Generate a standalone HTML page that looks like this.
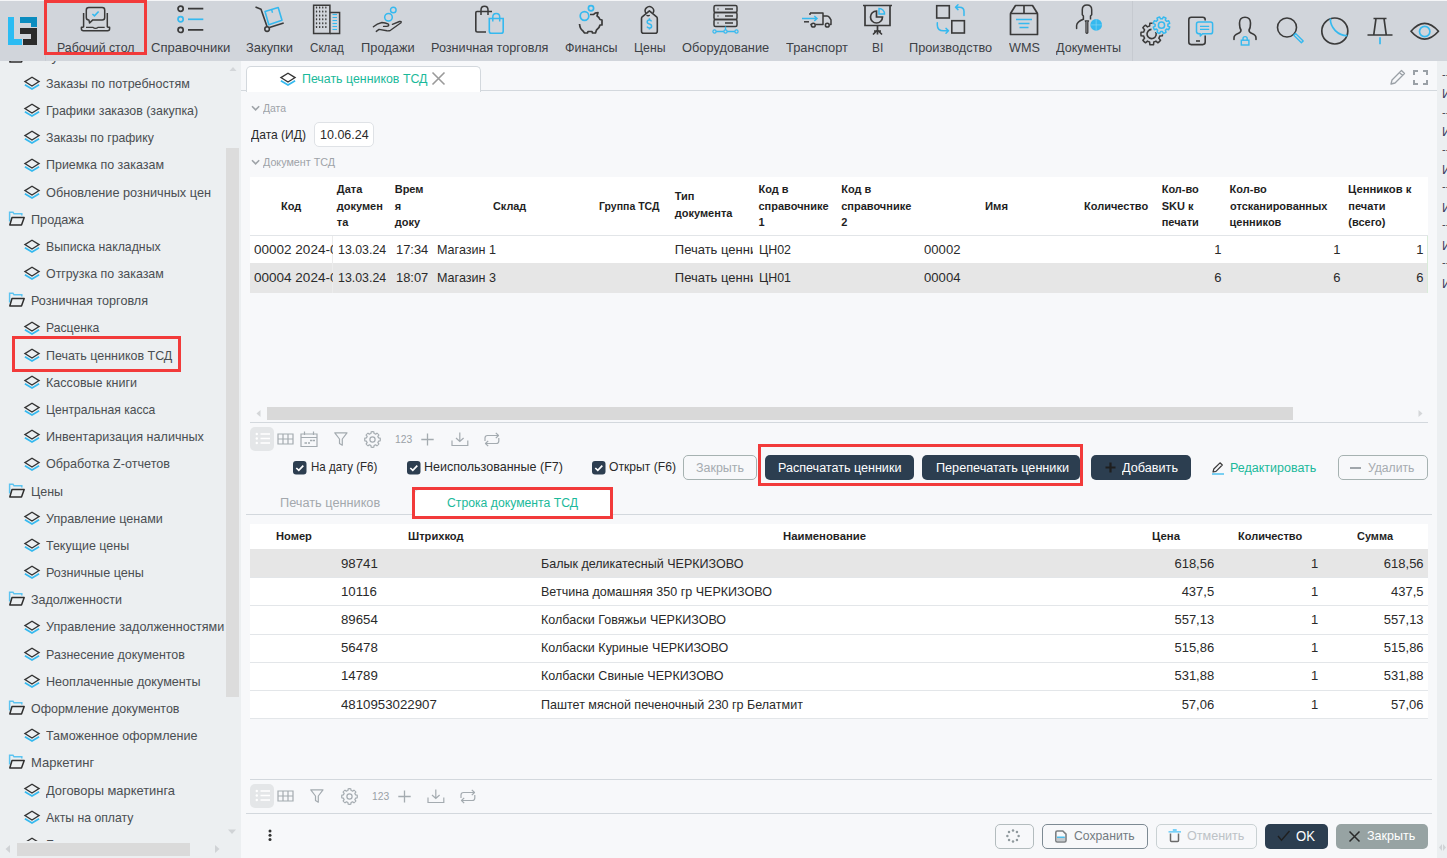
<!DOCTYPE html><html><head><meta charset="utf-8"><style>
html,body{margin:0;padding:0;}
body{width:1447px;height:858px;overflow:hidden;position:relative;background:#f7f8fa;font-family:"Liberation Sans",sans-serif;}
.t{position:absolute;white-space:nowrap;line-height:1;}
svg{overflow:visible}
</style></head><body>
<div style="position:absolute;left:0px;top:0px;width:1447px;height:1px;background:#f4f5f7"></div>
<div style="position:absolute;left:0px;top:1px;width:1447px;height:60px;background:#d1d5db"></div>
<div style="position:absolute;left:1132px;top:1px;width:1px;height:60px;background:#c6cad0"></div>
<div style="position:absolute;left:45px;top:1px;width:1px;height:60px;background:#c8ccd2"></div>
<div style="position:absolute;left:0px;top:61px;width:241px;height:797px;background:#eceff1"></div>
<div style="position:absolute;left:241px;top:61px;width:1196px;height:797px;background:#f7f8fa"></div>
<div style="position:absolute;left:1437px;top:61px;width:10px;height:797px;background:#eceff1"></div>
<div style="position:absolute;left:8px;top:17px;width:6px;height:28px;background:#2bbcf3"></div>
<div style="position:absolute;left:8px;top:39px;width:14px;height:6px;background:#2bbcf3"></div>
<div style="position:absolute;left:20px;top:17px;width:17px;height:6px;background:#0b8cbf"></div>
<div style="position:absolute;left:31px;top:17px;width:6px;height:10px;background:#0b8cbf"></div>
<div style="position:absolute;left:20px;top:28px;width:17px;height:6px;background:#2b2b2b"></div>
<div style="position:absolute;left:31px;top:28px;width:6px;height:17px;background:#2b2b2b"></div>
<div style="position:absolute;left:23px;top:39px;width:14px;height:6px;background:#2b2b2b"></div>
<svg style="position:absolute;left:80px;top:7px" width="32" height="26" viewBox="0 0 32 26" fill="none"><path d="M3.6 6 V20.3 M27.3 6 V20.3" stroke="#3a3a3a" stroke-width="1.5"/>
<path d="M3.6 20.3 H1.4 V21.7 Q1.4 23.7 3.4 23.7 H27.6 Q29.6 23.7 29.6 21.7 V20.3 H27.3" stroke="#3a3a3a" stroke-width="1.5" stroke-linejoin="round"/>
<path d="M6 20.4 H13 Q14 21.4 15.5 21.4 Q17 21.4 18 20.4 H24.7" stroke="#3a3a3a" stroke-width="1.3"/>
<path d="M8.8 0.5 H22.2 Q24.7 0.5 24.7 3 V10.4 Q24.7 12.9 22.2 12.9 H12.8 L9.6 16 L8.9 12.9 Q6.3 12.9 6.3 10.4 V3 Q6.3 0.5 8.8 0.5 Z" stroke="#3a3a3a" stroke-width="1.5" stroke-linejoin="round"/>
<path d="M12.4 7 L14.5 8.9 L18.6 4.5" stroke="#35b9ef" stroke-width="1.6"/></svg>
<svg style="position:absolute;left:176px;top:5px" width="30" height="28" viewBox="0 0 30 28" fill="none"><circle cx="4.6" cy="3.7" r="2.6" stroke="#3a3a3a" stroke-width="1.7"/>
<circle cx="4.6" cy="14.3" r="2.6" stroke="#35b9ef" stroke-width="1.7"/>
<circle cx="4.6" cy="24.9" r="2.6" stroke="#3a3a3a" stroke-width="1.7"/>
<path d="M12 3.7 H27.3 M12 24.9 H27.3" stroke="#3a3a3a" stroke-width="1.7"/>
<path d="M12 14.3 H27.3" stroke="#35b9ef" stroke-width="1.7"/></svg>
<svg style="position:absolute;left:254px;top:6px" width="32" height="27" viewBox="0 0 32 27" fill="none"><path d="M1.5 1 L7 3.2 L13.1 20.8" stroke="#3a3a3a" stroke-width="1.6" stroke-linejoin="round"/>
<circle cx="13.1" cy="23.1" r="2.3" stroke="#3a3a3a" stroke-width="1.6"/>
<path d="M15.4 21.4 L29.7 17" stroke="#3a3a3a" stroke-width="1.6"/>
<path d="M11 5.4 L24.2 1.5 L28 14.3 L14.8 18.7 Z" stroke="#35b9ef" stroke-width="1.6" stroke-linejoin="round"/>
<path d="M17.6 3.5 L18.5 6.8" stroke="#35b9ef" stroke-width="1.4"/></svg>
<svg style="position:absolute;left:312px;top:4px" width="30" height="32" viewBox="0 0 30 32" fill="none"><path d="M1.6 29.5 V1.3 H17.9 V29.5 Z" stroke="#3a3a3a" stroke-width="1.5"/>
<path d="M17.9 8.5 H27.6 V29.5 H17.9" stroke="#3a3a3a" stroke-width="1.5"/><rect x="3.9" y="2.6" width="1.3" height="2" rx="0.5" fill="#3a3a3a"/><rect x="3.9" y="6.5" width="1.3" height="2" rx="0.5" fill="#3a3a3a"/><rect x="3.9" y="10.4" width="1.3" height="2" rx="0.5" fill="#3a3a3a"/><rect x="3.9" y="14.3" width="1.3" height="2" rx="0.5" fill="#3a3a3a"/><rect x="3.9" y="18.2" width="1.3" height="2" rx="0.5" fill="#3a3a3a"/><rect x="3.9" y="22.1" width="1.3" height="2" rx="0.5" fill="#3a3a3a"/><rect x="7.0" y="2.6" width="1.3" height="2" rx="0.5" fill="#3a3a3a"/><rect x="7.0" y="6.5" width="1.3" height="2" rx="0.5" fill="#3a3a3a"/><rect x="7.0" y="10.4" width="1.3" height="2" rx="0.5" fill="#3a3a3a"/><rect x="7.0" y="14.3" width="1.3" height="2" rx="0.5" fill="#3a3a3a"/><rect x="7.0" y="18.2" width="1.3" height="2" rx="0.5" fill="#3a3a3a"/><rect x="7.0" y="22.1" width="1.3" height="2" rx="0.5" fill="#3a3a3a"/><rect x="10.1" y="2.6" width="1.3" height="2" rx="0.5" fill="#3a3a3a"/><rect x="10.1" y="6.5" width="1.3" height="2" rx="0.5" fill="#3a3a3a"/><rect x="10.1" y="10.4" width="1.3" height="2" rx="0.5" fill="#3a3a3a"/><rect x="10.1" y="14.3" width="1.3" height="2" rx="0.5" fill="#3a3a3a"/><rect x="10.1" y="18.2" width="1.3" height="2" rx="0.5" fill="#3a3a3a"/><rect x="10.1" y="22.1" width="1.3" height="2" rx="0.5" fill="#3a3a3a"/><rect x="13.2" y="2.6" width="1.3" height="2" rx="0.5" fill="#3a3a3a"/><rect x="13.2" y="6.5" width="1.3" height="2" rx="0.5" fill="#3a3a3a"/><rect x="13.2" y="10.4" width="1.3" height="2" rx="0.5" fill="#3a3a3a"/><rect x="13.2" y="14.3" width="1.3" height="2" rx="0.5" fill="#3a3a3a"/><rect x="13.2" y="18.2" width="1.3" height="2" rx="0.5" fill="#3a3a3a"/><rect x="13.2" y="22.1" width="1.3" height="2" rx="0.5" fill="#3a3a3a"/><path d="M20.5 10.5 H25" stroke="#35b9ef" stroke-width="1.1"/><path d="M20.5 13.5 H25" stroke="#35b9ef" stroke-width="1.1"/><path d="M20.5 16.5 H25" stroke="#35b9ef" stroke-width="1.1"/><path d="M20.5 19.5 H25" stroke="#35b9ef" stroke-width="1.1"/><path d="M20.5 22.5 H25" stroke="#35b9ef" stroke-width="1.1"/><path d="M20.5 25.5 H25" stroke="#35b9ef" stroke-width="1.1"/></svg>
<svg style="position:absolute;left:372px;top:6px" width="32" height="28" viewBox="0 0 32 28" fill="none"><circle cx="21.3" cy="4" r="2.8" stroke="#35b9ef" stroke-width="1.4"/>
<circle cx="16.5" cy="11.2" r="3.8" stroke="#35b9ef" stroke-width="1.5"/>
<path d="M1.4 20.8 Q5 17.5 9.9 16.5 Q13.5 16.7 15.9 17.8 Q17.8 19.5 15.4 20.2 L11.6 20.4" stroke="#3a3a3a" stroke-width="1.4" stroke-linecap="round" stroke-linejoin="round"/>
<path d="M20.4 18.3 L27.5 15.5 Q29.8 15 29 16.8 L18.5 24.3 Q17 25 15 24.8 L7 23.4 L4.3 25.4" stroke="#3a3a3a" stroke-width="1.4" stroke-linecap="round" stroke-linejoin="round"/></svg>
<svg style="position:absolute;left:474px;top:5px" width="32" height="30" viewBox="0 0 32 30" fill="none"><path d="M18 6.5 H3 Q1.8 6.5 1.8 7.8 V25.3 Q1.8 27 3.5 27 H12" stroke="#3a3a3a" stroke-width="1.6"/>
<path d="M7 10 V5 Q7 1.3 10.5 1.3 Q14 1.3 14 5 V10" stroke="#3a3a3a" stroke-width="1.5"/>
<path d="M15.3 13.5 H29.2 V26.2 Q29.2 28.3 27 28.3 H17.5 Q15.3 28.3 15.3 26.2 Z" stroke="#35b9ef" stroke-width="1.6"/>
<path d="M18.8 16.5 V12 Q18.8 8.5 22.2 8.5 Q25.7 8.5 25.7 12 V16.5" stroke="#35b9ef" stroke-width="1.5"/></svg>
<svg style="position:absolute;left:577px;top:4px" width="28" height="31" viewBox="0 0 28 31" fill="none"><circle cx="14" cy="4.3" r="2.6" stroke="#35b9ef" stroke-width="1.7"/>
<circle cx="7.5" cy="12" r="4.3" stroke="#35b9ef" stroke-width="1.7"/>
<path d="M2.5 20 Q3 25 6 27 L7.5 29 H10.5 L11 27.5 H15 L15.5 29 H18.5 L19.5 26 Q22.5 24 23 21 H25 V16 L23 15.5 Q22 13 20 12 L21 8.5 Q18 8.5 16.5 10.5 L13 10.5" stroke="#3a3a3a" stroke-width="1.7" stroke-linejoin="round"/></svg>
<svg style="position:absolute;left:639px;top:4px" width="21" height="31" viewBox="0 0 21 31" fill="none"><path d="M7.2 9.5 A4.2 4.2 0 1 1 14 9" stroke="#3a3a3a" stroke-width="1.5"/>
<path d="M10.4 6.8 L3.2 12.8 Q2.5 13.5 2.5 14.7 V27.2 Q2.5 29.2 4.5 29.2 H16.3 Q18.3 29.2 18.3 27.2 V14.7 Q18.3 13.5 17.6 12.8 Z" stroke="#3a3a3a" stroke-width="1.6" stroke-linejoin="round"/>
<path d="M7.5 11.2 Q9 12.3 10.8 11.2" stroke="#3a3a3a" stroke-width="1.3"/>
<path d="M12.6 17.3 Q11.8 16 10.4 16 Q8.2 16 8.2 18 Q8.2 19.6 10.4 19.9 Q12.6 20.3 12.6 22.2 Q12.6 24.1 10.4 24.1 Q8.7 24.1 8 22.7 M10.4 14.3 V16 M10.4 24.1 V25.6" stroke="#35b9ef" stroke-width="1.5"/></svg>
<svg style="position:absolute;left:712px;top:4px" width="28" height="32" viewBox="0 0 28 32" fill="none"><rect x="2" y="1.5" width="23" height="7" rx="1.5" stroke="#3a3a3a" stroke-width="1.5"/>
<rect x="2" y="8.5" width="23" height="7" rx="1.5" stroke="#3a3a3a" stroke-width="1.5"/>
<rect x="2" y="15.5" width="23" height="7" rx="1.5" stroke="#3a3a3a" stroke-width="1.5"/>
<path d="M5.5 5 H6.5 M5.5 12 H6.5 M5.5 19 H6.5" stroke="#3a3a3a" stroke-width="1.3"/>
<path d="M13 5 H21 M13 12 H21 M13 19 H21" stroke="#3a3a3a" stroke-width="1.4"/>
<path d="M3.5 27.5 H23.5 M13.5 22.5 V26" stroke="#35b9ef" stroke-width="1.3"/>
<circle cx="2.5" cy="27.5" r="1.6" stroke="#35b9ef" stroke-width="1.2" fill="#d1d5db"/><circle cx="13.5" cy="27.5" r="1.6" stroke="#35b9ef" stroke-width="1.2" fill="#d1d5db"/><circle cx="24.5" cy="27.5" r="1.6" stroke="#35b9ef" stroke-width="1.2" fill="#d1d5db"/></svg>
<svg style="position:absolute;left:801px;top:11px" width="32" height="18" viewBox="0 0 32 18" fill="none"><path d="M9 2 H22 V13.5 H14.5 M22 5 H26 Q27.5 5 28.5 6.5 L30 8.8 V13.5 H28.8 M9 2 V4" stroke="#3a3a3a" stroke-width="1.5" stroke-linejoin="round"/>
<circle cx="12.3" cy="14.2" r="1.9" stroke="#3a3a3a" stroke-width="1.5"/><circle cx="26.3" cy="14.2" r="1.9" stroke="#3a3a3a" stroke-width="1.5"/>
<path d="M9.3 13.5 H10" stroke="#3a3a3a" stroke-width="1.5"/>
<path d="M1 7.5 H16 M13.3 5 L16 7.5 L13.3 10" stroke="#35b9ef" stroke-width="1.5"/>
<path d="M3 10.8 H8" stroke="#3a3a3a" stroke-width="1.5"/></svg>
<svg style="position:absolute;left:862px;top:4px" width="31" height="32" viewBox="0 0 31 32" fill="none"><path d="M1 1.5 H30 M3 1.5 V21.5 H28 V1.5" stroke="#3a3a3a" stroke-width="1.7"/>
<path d="M15.5 21.5 V26 M11 30.5 L15.5 26 L20 30.5 M15.5 26 V30.5 M12 27 H19" stroke="#3a3a3a" stroke-width="1.7"/>
<path d="M14.5 7 A6 6 0 1 0 20.5 13 H14.5 Z" stroke="#3a3a3a" stroke-width="1.7"/>
<path d="M17 4.5 A5.5 5.5 0 0 1 22.5 10 H17 Z" stroke="#35b9ef" stroke-width="1.4"/></svg>
<svg style="position:absolute;left:935px;top:4px" width="31" height="31" viewBox="0 0 31 31" fill="none"><rect x="1.7" y="1.7" width="12.6" height="12.3" stroke="#3a3a3a" stroke-width="1.6"/>
<rect x="16.8" y="16.7" width="12.6" height="12.3" stroke="#3a3a3a" stroke-width="1.6"/>
<path d="M20.5 3.2 H24.5 Q29 3.2 29 7.5 V11.5 M20.5 3.2 L23 0.8 M20.5 3.2 L23 5.6" stroke="#35b9ef" stroke-width="1.5" stroke-linecap="round"/>
<path d="M13.5 26.8 H8.5 Q2.3 26.8 2.3 21 V18.8 M13.5 26.8 L11 24.4 M13.5 26.8 L11 29.2" stroke="#35b9ef" stroke-width="1.5" stroke-linecap="round"/></svg>
<svg style="position:absolute;left:1009px;top:4px" width="30" height="32" viewBox="0 0 30 32" fill="none"><path d="M1.5 9.5 H28.5 V30.5 H1.5 Z M1.5 9.5 L6.5 1.5 H23.5 L28.5 9.5 M15 1.5 V9.5" stroke="#3a3a3a" stroke-width="1.7" stroke-linejoin="round"/>
<path d="M7 15.5 H23 M9.5 19.5 H20.5 M10.5 23.5 H19.5" stroke="#35b9ef" stroke-width="1.5"/></svg>
<svg style="position:absolute;left:1074px;top:4px" width="30" height="32" viewBox="0 0 30 32" fill="none"><path d="M9.4 15.5 V12 L8.3 10.8 V5.8 Q8.3 1 13 1 Q17.7 1 17.7 5.8 V10.8 L16.5 12 V15.6" stroke="#3a3a3a" stroke-width="1.5" stroke-linejoin="round"/>
<path d="M9.4 15.2 Q3 17.5 2.6 21.5 V24.5" stroke="#3a3a3a" stroke-width="1.5" stroke-linecap="round"/>
<path d="M11.2 16.8 H14.6 L13.8 18.3 V28.6 Q12.9 30.2 12 28.6 V18.3 Z" stroke="#3a3a3a" stroke-width="1.3" stroke-linejoin="round"/>
<circle cx="22.2" cy="20.9" r="5.9" fill="#35b9ef"/>
<path d="M16.5 20.9 H28 M22.2 15 V26.8" stroke="#8fd6f5" stroke-width="0.6"/></svg>
<svg style="position:absolute;left:1135px;top:12px" width="40" height="38" viewBox="0 0 40 38" fill="none"><path d="M24.74 19.94 L27.34 20.14 A10.8 10.8 0 0 1 27.34 23.86 L24.74 24.06 A8.3 8.3 0 0 1 23.84 26.23 L25.54 28.21 A10.8 10.8 0 0 1 22.91 30.84 L20.93 29.14 A8.3 8.3 0 0 1 18.76 30.04 L18.56 32.64 A10.8 10.8 0 0 1 14.84 32.64 L14.64 30.04 A8.3 8.3 0 0 1 12.47 29.14 L10.49 30.84 A10.8 10.8 0 0 1 7.86 28.21 L9.56 26.23 A8.3 8.3 0 0 1 8.66 24.06 L6.06 23.86 A10.8 10.8 0 0 1 6.06 20.14 L8.66 19.94 A8.3 8.3 0 0 1 9.56 17.77 L7.86 15.79 A10.8 10.8 0 0 1 10.49 13.16 L12.47 14.86 A8.3 8.3 0 0 1 14.64 13.96 L14.84 11.36 A10.8 10.8 0 0 1 18.56 11.36 L18.76 13.96 A8.3 8.3 0 0 1 20.93 14.86 L22.91 13.16 A10.8 10.8 0 0 1 25.54 15.79 L23.84 17.77 A8.3 8.3 0 0 1 24.74 19.94 Z" stroke="#3a3a3a" stroke-width="1.5" stroke-linejoin="round"/>
<path d="M20.5 19.5 A4.6 4.6 0 1 1 16.5 17.4" stroke="#3a3a3a" stroke-width="1.6"/>
<circle cx="26.5" cy="13.2" r="9.2" fill="#d1d5db"/>
<path d="M32.84 14.08 L34.70 15.01 A8.4 8.4 0 0 1 33.60 17.68 L31.63 17.03 A6.4 6.4 0 0 1 30.36 18.31 L31.02 20.28 A8.4 8.4 0 0 1 28.35 21.39 L27.42 19.53 A6.4 6.4 0 0 1 25.62 19.54 L24.69 21.40 A8.4 8.4 0 0 1 22.02 20.30 L22.67 18.33 A6.4 6.4 0 0 1 21.39 17.06 L19.42 17.72 A8.4 8.4 0 0 1 18.31 15.05 L20.17 14.12 A6.4 6.4 0 0 1 20.16 12.32 L18.30 11.39 A8.4 8.4 0 0 1 19.40 8.72 L21.37 9.37 A6.4 6.4 0 0 1 22.64 8.09 L21.98 6.12 A8.4 8.4 0 0 1 24.65 5.01 L25.58 6.87 A6.4 6.4 0 0 1 27.38 6.86 L28.31 5.00 A8.4 8.4 0 0 1 30.98 6.10 L30.33 8.07 A6.4 6.4 0 0 1 31.61 9.34 L33.58 8.68 A8.4 8.4 0 0 1 34.69 11.35 L32.83 12.28 A6.4 6.4 0 0 1 32.84 14.08 Z" stroke="#35b9ef" stroke-width="1.5" stroke-linejoin="round"/>
<circle cx="26.5" cy="13.2" r="3.1" stroke="#35b9ef" stroke-width="1.5"/></svg>
<svg style="position:absolute;left:1187px;top:16px" width="28" height="30" viewBox="0 0 28 30" fill="none"><path d="M18.2 4.5 V3.8 Q18.2 1.3 15.7 1.3 H4.3 Q1.8 1.3 1.8 3.8 V26.1 Q1.8 28.6 4.3 28.6 H15.7 Q18.2 28.6 18.2 26.1 V19.5" stroke="#3a3a3a" stroke-width="1.6"/>
<path d="M9 25 H13" stroke="#3a3a3a" stroke-width="1.6"/>
<path d="M11.7 6 H23.5 Q25.6 6 25.6 8 V15.7 Q25.6 17.8 23.5 17.8 H15.5 L13.3 20 V17.8 Q9.5 17.8 9.5 15.7 V8 Q9.5 6 11.7 6 Z" stroke="#35b9ef" stroke-width="1.5" stroke-linejoin="round"/>
<path d="M13 10.4 H22.2 M13 13.4 H22.2" stroke="#35b9ef" stroke-width="1.3"/></svg>
<svg style="position:absolute;left:1232px;top:16px" width="27" height="30" viewBox="0 0 27 30" fill="none"><path d="M2 23.5 V22 Q2 19 6 17.5 Q9 16.5 9 14 Q7.5 12 7.5 7 Q7.5 1.3 13 1.3 Q18.5 1.3 18.5 7 Q18.5 12 17 14 Q17 16.5 20 17.5 Q24 19 24 22 V23.5" stroke="#3a3a3a" stroke-width="1.6" stroke-linecap="round"/>
<rect x="9.3" y="24.2" width="7.6" height="4.8" stroke="#35b9ef" stroke-width="1.4"/>
<path d="M11 24.2 V22.6 Q11 20.6 13.1 20.6 Q15.2 20.6 15.2 22.6 V24.2" stroke="#35b9ef" stroke-width="1.4"/></svg>
<svg style="position:absolute;left:1276px;top:17px" width="30" height="29" viewBox="0 0 30 29" fill="none"><circle cx="11" cy="10.5" r="9.5" stroke="#3a3a3a" stroke-width="1.6"/>
<path d="M17.8 18.2 L19.6 16.4 L27.2 24 L25.4 25.8 Z" stroke="#35b9ef" stroke-width="1.4" stroke-linejoin="round"/></svg>
<svg style="position:absolute;left:1320px;top:16px" width="30" height="30" viewBox="0 0 30 30" fill="none"><circle cx="14.8" cy="15" r="13" stroke="#3a3a3a" stroke-width="1.7"/>
<path d="M10.3 2.6 A17 17 0 0 0 27.3 19.6" stroke="#35b9ef" stroke-width="1.7"/></svg>
<svg style="position:absolute;left:1367px;top:17px" width="27" height="29" viewBox="0 0 27 29" fill="none"><path d="M6.5 1.5 H19.5 M9 1.5 L6.8 17.5 M17 1.5 L19.2 17.5 M0.5 18 H25.5" stroke="#3a3a3a" stroke-width="1.7"/>
<path d="M13 20.3 V27.2" stroke="#35b9ef" stroke-width="1.7"/></svg>
<svg style="position:absolute;left:1409px;top:21px" width="32" height="21" viewBox="0 0 32 21" fill="none"><path d="M2 10.3 Q15.5 -5.5 29.5 10.3 Q15.5 26 2 10.3 Z" stroke="#3a3a3a" stroke-width="1.7" stroke-linejoin="round"/>
<circle cx="15.7" cy="10.5" r="5.2" stroke="#35b9ef" stroke-width="1.7"/></svg>
<div style="position:absolute;left:44px;top:0px;width:103px;height:55px;box-sizing:border-box;border:3px solid #f23a3a"></div>
<div class="t" style="left:56.5px;top:42.0px;font-size:12.2px;color:#3d4146;font-weight:normal;transform:scaleX(1.0119);transform-origin:0 0;">Рабочий стол</div>
<div class="t" style="left:150.6px;top:42.0px;font-size:12.2px;color:#3d4146;font-weight:normal;transform:scaleX(1.0743);transform-origin:0 0;">Справочники</div>
<div class="t" style="left:246.0px;top:42.0px;font-size:12.2px;color:#3d4146;font-weight:normal;transform:scaleX(1.0542);transform-origin:0 0;">Закупки</div>
<div class="t" style="left:309.9px;top:42.0px;font-size:12.2px;color:#3d4146;font-weight:normal;transform:scaleX(0.9544);transform-origin:0 0;">Склад</div>
<div class="t" style="left:360.6px;top:42.0px;font-size:12.2px;color:#3d4146;font-weight:normal;transform:scaleX(1.0559);transform-origin:0 0;">Продажи</div>
<div class="t" style="left:430.8px;top:42.0px;font-size:12.2px;color:#3d4146;font-weight:normal;transform:scaleX(1.0381);transform-origin:0 0;">Розничная торговля</div>
<div class="t" style="left:564.8px;top:42.0px;font-size:12.2px;color:#3d4146;font-weight:normal;transform:scaleX(1.0231);transform-origin:0 0;">Финансы</div>
<div class="t" style="left:633.8px;top:42.0px;font-size:12.2px;color:#3d4146;font-weight:normal;transform:scaleX(1.0058);transform-origin:0 0;">Цены</div>
<div class="t" style="left:681.9px;top:42.0px;font-size:12.2px;color:#3d4146;font-weight:normal;transform:scaleX(1.0521);transform-origin:0 0;">Оборудование</div>
<div class="t" style="left:785.7px;top:42.0px;font-size:12.2px;color:#3d4146;font-weight:normal;transform:scaleX(1.0584);transform-origin:0 0;">Транспорт</div>
<div class="t" style="left:872.2px;top:42.0px;font-size:12.2px;color:#3d4146;font-weight:normal;transform:scaleX(0.9803);transform-origin:0 0;">BI</div>
<div class="t" style="left:908.7px;top:42.0px;font-size:12.2px;color:#3d4146;font-weight:normal;transform:scaleX(1.0472);transform-origin:0 0;">Производство</div>
<div class="t" style="left:1008.5px;top:42.0px;font-size:12.2px;color:#3d4146;font-weight:normal;transform:scaleX(1.0397);transform-origin:0 0;">WMS</div>
<div class="t" style="left:1056.2px;top:42.0px;font-size:12.2px;color:#3d4146;font-weight:normal;transform:scaleX(1.0351);transform-origin:0 0;">Документы</div>
<div style="position:absolute;left:0;top:61px;width:226px;height:781px;overflow:hidden">
<svg style="position:absolute;left:8px;top:-13.385000000000005px" width="18" height="16" viewBox="0 0 18 16" fill="none"><path d="M4 6.5 H16.2 L13.5 14 H1.8 Z" stroke="#2e2e2e" stroke-width="1.5" stroke-linejoin="round"/></svg>
<div class="t" style="left:30.0px;top:-10.0px;font-size:12.5px;color:#4a4e52;font-weight:normal;transform:scaleX(1.0750);transform-origin:0 0;">Закупки</div>
<svg style="position:absolute;left:23px;top:14.999999999999996px" width="18" height="14" viewBox="0 0 18 14" fill="none"><path d="M1.9 5.6 L9 1.2 L16.1 5.6 L9 10 Z" stroke="#333" stroke-width="1.3" stroke-linejoin="miter"/><path d="M1.9 8.7 L9 13 L16.1 8.7" stroke="#35b9ef" stroke-width="1.7"/></svg>
<div class="t" style="left:46.4px;top:16.0px;font-size:13px;color:#4a4e52;font-weight:normal;transform:scaleX(0.9620);transform-origin:0 0;">Заказы по потребностям</div>
<svg style="position:absolute;left:23px;top:42.185px" width="18" height="14" viewBox="0 0 18 14" fill="none"><path d="M1.9 5.6 L9 1.2 L16.1 5.6 L9 10 Z" stroke="#333" stroke-width="1.3" stroke-linejoin="miter"/><path d="M1.9 8.7 L9 13 L16.1 8.7" stroke="#35b9ef" stroke-width="1.7"/></svg>
<div class="t" style="left:46.4px;top:43.0px;font-size:13px;color:#4a4e52;font-weight:normal;transform:scaleX(0.9535);transform-origin:0 0;">Графики заказов (закупка)</div>
<svg style="position:absolute;left:23px;top:69.36999999999999px" width="18" height="14" viewBox="0 0 18 14" fill="none"><path d="M1.9 5.6 L9 1.2 L16.1 5.6 L9 10 Z" stroke="#333" stroke-width="1.3" stroke-linejoin="miter"/><path d="M1.9 8.7 L9 13 L16.1 8.7" stroke="#35b9ef" stroke-width="1.7"/></svg>
<div class="t" style="left:46.4px;top:70.0px;font-size:13px;color:#4a4e52;font-weight:normal;transform:scaleX(0.9421);transform-origin:0 0;">Заказы по графику</div>
<svg style="position:absolute;left:23px;top:96.55499999999999px" width="18" height="14" viewBox="0 0 18 14" fill="none"><path d="M1.9 5.6 L9 1.2 L16.1 5.6 L9 10 Z" stroke="#333" stroke-width="1.3" stroke-linejoin="miter"/><path d="M1.9 8.7 L9 13 L16.1 8.7" stroke="#35b9ef" stroke-width="1.7"/></svg>
<div class="t" style="left:46.4px;top:97.0px;font-size:13px;color:#4a4e52;font-weight:normal;transform:scaleX(0.9588);transform-origin:0 0;">Приемка по заказам</div>
<svg style="position:absolute;left:23px;top:123.73999999999998px" width="18" height="14" viewBox="0 0 18 14" fill="none"><path d="M1.9 5.6 L9 1.2 L16.1 5.6 L9 10 Z" stroke="#333" stroke-width="1.3" stroke-linejoin="miter"/><path d="M1.9 8.7 L9 13 L16.1 8.7" stroke="#35b9ef" stroke-width="1.7"/></svg>
<div class="t" style="left:46.4px;top:125.0px;font-size:13px;color:#4a4e52;font-weight:normal;transform:scaleX(0.9792);transform-origin:0 0;">Обновление розничных цен</div>
<svg style="position:absolute;left:7.5px;top:149.72499999999997px" width="18" height="16" viewBox="0 0 18 16" fill="none"><path d="M1.6 10.5 V1.3 H5 L6 2.8 H13.8 V4.5" stroke="#5cc3f0" stroke-width="1.5"/><path d="M4 6.5 H16.2 L13.5 14 H1.8 Z" stroke="#2e2e2e" stroke-width="1.5" stroke-linejoin="round"/></svg>
<div class="t" style="left:30.5px;top:152.0px;font-size:13px;color:#4a4e52;font-weight:normal;transform:scaleX(0.9749);transform-origin:0 0;">Продажа</div>
<svg style="position:absolute;left:23px;top:178.10999999999996px" width="18" height="14" viewBox="0 0 18 14" fill="none"><path d="M1.9 5.6 L9 1.2 L16.1 5.6 L9 10 Z" stroke="#333" stroke-width="1.3" stroke-linejoin="miter"/><path d="M1.9 8.7 L9 13 L16.1 8.7" stroke="#35b9ef" stroke-width="1.7"/></svg>
<div class="t" style="left:46.4px;top:179.0px;font-size:13px;color:#4a4e52;font-weight:normal;transform:scaleX(0.9448);transform-origin:0 0;">Выписка накладных</div>
<svg style="position:absolute;left:23px;top:205.29499999999996px" width="18" height="14" viewBox="0 0 18 14" fill="none"><path d="M1.9 5.6 L9 1.2 L16.1 5.6 L9 10 Z" stroke="#333" stroke-width="1.3" stroke-linejoin="miter"/><path d="M1.9 8.7 L9 13 L16.1 8.7" stroke="#35b9ef" stroke-width="1.7"/></svg>
<div class="t" style="left:46.4px;top:206.0px;font-size:13px;color:#4a4e52;font-weight:normal;transform:scaleX(0.9544);transform-origin:0 0;">Отгрузка по заказам</div>
<svg style="position:absolute;left:7.5px;top:231.27999999999997px" width="18" height="16" viewBox="0 0 18 16" fill="none"><path d="M1.6 10.5 V1.3 H5 L6 2.8 H13.8 V4.5" stroke="#5cc3f0" stroke-width="1.5"/><path d="M4 6.5 H16.2 L13.5 14 H1.8 Z" stroke="#2e2e2e" stroke-width="1.5" stroke-linejoin="round"/></svg>
<div class="t" style="left:30.5px;top:233.0px;font-size:13px;color:#4a4e52;font-weight:normal;transform:scaleX(0.9701);transform-origin:0 0;">Розничная торговля</div>
<svg style="position:absolute;left:23px;top:259.66499999999996px" width="18" height="14" viewBox="0 0 18 14" fill="none"><path d="M1.9 5.6 L9 1.2 L16.1 5.6 L9 10 Z" stroke="#333" stroke-width="1.3" stroke-linejoin="miter"/><path d="M1.9 8.7 L9 13 L16.1 8.7" stroke="#35b9ef" stroke-width="1.7"/></svg>
<div class="t" style="left:46.4px;top:260.0px;font-size:13px;color:#4a4e52;font-weight:normal;transform:scaleX(0.9370);transform-origin:0 0;">Расценка</div>
<svg style="position:absolute;left:23px;top:286.84999999999997px" width="18" height="14" viewBox="0 0 18 14" fill="none"><path d="M1.9 5.6 L9 1.2 L16.1 5.6 L9 10 Z" stroke="#333" stroke-width="1.3" stroke-linejoin="miter"/><path d="M1.9 8.7 L9 13 L16.1 8.7" stroke="#35b9ef" stroke-width="1.7"/></svg>
<div class="t" style="left:46.4px;top:288.0px;font-size:13px;color:#4a4e52;font-weight:normal;transform:scaleX(0.9584);transform-origin:0 0;">Печать ценников ТСД</div>
<svg style="position:absolute;left:23px;top:314.03499999999997px" width="18" height="14" viewBox="0 0 18 14" fill="none"><path d="M1.9 5.6 L9 1.2 L16.1 5.6 L9 10 Z" stroke="#333" stroke-width="1.3" stroke-linejoin="miter"/><path d="M1.9 8.7 L9 13 L16.1 8.7" stroke="#35b9ef" stroke-width="1.7"/></svg>
<div class="t" style="left:46.4px;top:315.0px;font-size:13px;color:#4a4e52;font-weight:normal;transform:scaleX(0.9639);transform-origin:0 0;">Кассовые книги</div>
<svg style="position:absolute;left:23px;top:341.21999999999997px" width="18" height="14" viewBox="0 0 18 14" fill="none"><path d="M1.9 5.6 L9 1.2 L16.1 5.6 L9 10 Z" stroke="#333" stroke-width="1.3" stroke-linejoin="miter"/><path d="M1.9 8.7 L9 13 L16.1 8.7" stroke="#35b9ef" stroke-width="1.7"/></svg>
<div class="t" style="left:46.4px;top:342.0px;font-size:13px;color:#4a4e52;font-weight:normal;transform:scaleX(0.9318);transform-origin:0 0;">Центральная касса</div>
<svg style="position:absolute;left:23px;top:368.405px" width="18" height="14" viewBox="0 0 18 14" fill="none"><path d="M1.9 5.6 L9 1.2 L16.1 5.6 L9 10 Z" stroke="#333" stroke-width="1.3" stroke-linejoin="miter"/><path d="M1.9 8.7 L9 13 L16.1 8.7" stroke="#35b9ef" stroke-width="1.7"/></svg>
<div class="t" style="left:46.4px;top:369.0px;font-size:13px;color:#4a4e52;font-weight:normal;transform:scaleX(0.9691);transform-origin:0 0;">Инвентаризация наличных</div>
<svg style="position:absolute;left:23px;top:395.59px" width="18" height="14" viewBox="0 0 18 14" fill="none"><path d="M1.9 5.6 L9 1.2 L16.1 5.6 L9 10 Z" stroke="#333" stroke-width="1.3" stroke-linejoin="miter"/><path d="M1.9 8.7 L9 13 L16.1 8.7" stroke="#35b9ef" stroke-width="1.7"/></svg>
<div class="t" style="left:46.4px;top:396.0px;font-size:13px;color:#4a4e52;font-weight:normal;transform:scaleX(0.9698);transform-origin:0 0;">Обработка Z-отчетов</div>
<svg style="position:absolute;left:7.5px;top:421.575px" width="18" height="16" viewBox="0 0 18 16" fill="none"><path d="M1.6 10.5 V1.3 H5 L6 2.8 H13.8 V4.5" stroke="#5cc3f0" stroke-width="1.5"/><path d="M4 6.5 H16.2 L13.5 14 H1.8 Z" stroke="#2e2e2e" stroke-width="1.5" stroke-linejoin="round"/></svg>
<div class="t" style="left:30.5px;top:424.0px;font-size:13px;color:#4a4e52;font-weight:normal;transform:scaleX(0.9589);transform-origin:0 0;">Цены</div>
<svg style="position:absolute;left:23px;top:449.96px" width="18" height="14" viewBox="0 0 18 14" fill="none"><path d="M1.9 5.6 L9 1.2 L16.1 5.6 L9 10 Z" stroke="#333" stroke-width="1.3" stroke-linejoin="miter"/><path d="M1.9 8.7 L9 13 L16.1 8.7" stroke="#35b9ef" stroke-width="1.7"/></svg>
<div class="t" style="left:46.4px;top:451.0px;font-size:13px;color:#4a4e52;font-weight:normal;transform:scaleX(0.9651);transform-origin:0 0;">Управление ценами</div>
<svg style="position:absolute;left:23px;top:477.1449999999999px" width="18" height="14" viewBox="0 0 18 14" fill="none"><path d="M1.9 5.6 L9 1.2 L16.1 5.6 L9 10 Z" stroke="#333" stroke-width="1.3" stroke-linejoin="miter"/><path d="M1.9 8.7 L9 13 L16.1 8.7" stroke="#35b9ef" stroke-width="1.7"/></svg>
<div class="t" style="left:46.4px;top:478.0px;font-size:13px;color:#4a4e52;font-weight:normal;transform:scaleX(0.9593);transform-origin:0 0;">Текущие цены</div>
<svg style="position:absolute;left:23px;top:504.33px" width="18" height="14" viewBox="0 0 18 14" fill="none"><path d="M1.9 5.6 L9 1.2 L16.1 5.6 L9 10 Z" stroke="#333" stroke-width="1.3" stroke-linejoin="miter"/><path d="M1.9 8.7 L9 13 L16.1 8.7" stroke="#35b9ef" stroke-width="1.7"/></svg>
<div class="t" style="left:46.4px;top:505.0px;font-size:13px;color:#4a4e52;font-weight:normal;transform:scaleX(0.9714);transform-origin:0 0;">Розничные цены</div>
<svg style="position:absolute;left:7.5px;top:530.3149999999999px" width="18" height="16" viewBox="0 0 18 16" fill="none"><path d="M1.6 10.5 V1.3 H5 L6 2.8 H13.8 V4.5" stroke="#5cc3f0" stroke-width="1.5"/><path d="M4 6.5 H16.2 L13.5 14 H1.8 Z" stroke="#2e2e2e" stroke-width="1.5" stroke-linejoin="round"/></svg>
<div class="t" style="left:30.5px;top:532.0px;font-size:13px;color:#4a4e52;font-weight:normal;transform:scaleX(0.9626);transform-origin:0 0;">Задолженности</div>
<svg style="position:absolute;left:23px;top:558.6999999999999px" width="18" height="14" viewBox="0 0 18 14" fill="none"><path d="M1.9 5.6 L9 1.2 L16.1 5.6 L9 10 Z" stroke="#333" stroke-width="1.3" stroke-linejoin="miter"/><path d="M1.9 8.7 L9 13 L16.1 8.7" stroke="#35b9ef" stroke-width="1.7"/></svg>
<div class="t" style="left:46.4px;top:559.0px;font-size:13px;color:#4a4e52;font-weight:normal;transform:scaleX(0.9664);transform-origin:0 0;">Управление задолженностями</div>
<svg style="position:absolute;left:23px;top:585.885px" width="18" height="14" viewBox="0 0 18 14" fill="none"><path d="M1.9 5.6 L9 1.2 L16.1 5.6 L9 10 Z" stroke="#333" stroke-width="1.3" stroke-linejoin="miter"/><path d="M1.9 8.7 L9 13 L16.1 8.7" stroke="#35b9ef" stroke-width="1.7"/></svg>
<div class="t" style="left:46.4px;top:587.0px;font-size:13px;color:#4a4e52;font-weight:normal;transform:scaleX(0.9579);transform-origin:0 0;">Разнесение документов</div>
<svg style="position:absolute;left:23px;top:613.0699999999999px" width="18" height="14" viewBox="0 0 18 14" fill="none"><path d="M1.9 5.6 L9 1.2 L16.1 5.6 L9 10 Z" stroke="#333" stroke-width="1.3" stroke-linejoin="miter"/><path d="M1.9 8.7 L9 13 L16.1 8.7" stroke="#35b9ef" stroke-width="1.7"/></svg>
<div class="t" style="left:46.4px;top:614.0px;font-size:13px;color:#4a4e52;font-weight:normal;transform:scaleX(0.9686);transform-origin:0 0;">Неоплаченные документы</div>
<svg style="position:absolute;left:7.5px;top:639.055px" width="18" height="16" viewBox="0 0 18 16" fill="none"><path d="M1.6 10.5 V1.3 H5 L6 2.8 H13.8 V4.5" stroke="#5cc3f0" stroke-width="1.5"/><path d="M4 6.5 H16.2 L13.5 14 H1.8 Z" stroke="#2e2e2e" stroke-width="1.5" stroke-linejoin="round"/></svg>
<div class="t" style="left:30.5px;top:641.0px;font-size:13px;color:#4a4e52;font-weight:normal;transform:scaleX(0.9605);transform-origin:0 0;">Оформление документов</div>
<svg style="position:absolute;left:23px;top:667.4399999999999px" width="18" height="14" viewBox="0 0 18 14" fill="none"><path d="M1.9 5.6 L9 1.2 L16.1 5.6 L9 10 Z" stroke="#333" stroke-width="1.3" stroke-linejoin="miter"/><path d="M1.9 8.7 L9 13 L16.1 8.7" stroke="#35b9ef" stroke-width="1.7"/></svg>
<div class="t" style="left:46.4px;top:668.0px;font-size:13px;color:#4a4e52;font-weight:normal;transform:scaleX(0.9657);transform-origin:0 0;">Таможенное оформление</div>
<svg style="position:absolute;left:7.5px;top:693.425px" width="18" height="16" viewBox="0 0 18 16" fill="none"><path d="M1.6 10.5 V1.3 H5 L6 2.8 H13.8 V4.5" stroke="#5cc3f0" stroke-width="1.5"/><path d="M4 6.5 H16.2 L13.5 14 H1.8 Z" stroke="#2e2e2e" stroke-width="1.5" stroke-linejoin="round"/></svg>
<div class="t" style="left:30.5px;top:695.0px;font-size:13px;color:#4a4e52;font-weight:normal;transform:scaleX(0.9999);transform-origin:0 0;">Маркетинг</div>
<svg style="position:absolute;left:23px;top:721.81px" width="18" height="14" viewBox="0 0 18 14" fill="none"><path d="M1.9 5.6 L9 1.2 L16.1 5.6 L9 10 Z" stroke="#333" stroke-width="1.3" stroke-linejoin="miter"/><path d="M1.9 8.7 L9 13 L16.1 8.7" stroke="#35b9ef" stroke-width="1.7"/></svg>
<div class="t" style="left:46.4px;top:723.0px;font-size:13px;color:#4a4e52;font-weight:normal;transform:scaleX(0.9911);transform-origin:0 0;">Договоры маркетинга</div>
<svg style="position:absolute;left:23px;top:748.995px" width="18" height="14" viewBox="0 0 18 14" fill="none"><path d="M1.9 5.6 L9 1.2 L16.1 5.6 L9 10 Z" stroke="#333" stroke-width="1.3" stroke-linejoin="miter"/><path d="M1.9 8.7 L9 13 L16.1 8.7" stroke="#35b9ef" stroke-width="1.7"/></svg>
<div class="t" style="left:46.4px;top:750.0px;font-size:13px;color:#4a4e52;font-weight:normal;transform:scaleX(0.9414);transform-origin:0 0;">Акты на оплату</div>
<svg style="position:absolute;left:23px;top:776.18px" width="18" height="14" viewBox="0 0 18 14" fill="none"><path d="M1.9 5.6 L9 1.2 L16.1 5.6 L9 10 Z" stroke="#333" stroke-width="1.3" stroke-linejoin="miter"/><path d="M1.9 8.7 L9 13 L16.1 8.7" stroke="#35b9ef" stroke-width="1.7"/></svg>
<div class="t" style="left:46.4px;top:777.0px;font-size:13px;color:#4a4e52;font-weight:normal;transform:scaleX(1.0288);transform-origin:0 0;">Бюджеты</div>
</div>
<div style="position:absolute;left:12px;top:336px;width:169px;height:36px;box-sizing:border-box;border:3px solid #f23a3a"></div>
<div style="position:absolute;left:226px;top:148px;width:13px;height:549px;background:#dcdcdc"></div>
<svg style="position:absolute;left:228px;top:66px" width="10" height="6" viewBox="0 0 10 6" fill="none"><path d="M1.5 5 L5 1 L8.5 5 Z" fill="#d3d6d9"/></svg>
<svg style="position:absolute;left:227px;top:828px" width="10" height="8" viewBox="0 0 10 8" fill="none"><path d="M1 1.5 L5 6 L9 1.5 Z" fill="#d0d3d6"/></svg>
<div style="position:absolute;left:0px;top:841px;width:241px;height:17px;background:#eceff1"></div>
<div style="position:absolute;left:17px;top:843px;width:173px;height:13px;background:#dadada"></div>
<svg style="position:absolute;left:4px;top:844px" width="8" height="10" viewBox="0 0 8 10" fill="none"><path d="M6 1 L1.5 5 L6 9 Z" fill="#d0d3d6"/></svg>
<svg style="position:absolute;left:213px;top:844px" width="8" height="10" viewBox="0 0 8 10" fill="none"><path d="M2 1 L6.5 5 L2 9 Z" fill="#d0d3d6"/></svg>
<div style="position:absolute;left:241px;top:90px;width:1196px;height:1px;background:#d3d8dd"></div>
<div style="position:absolute;left:246px;top:66px;width:233px;height:25px;background:#fff;border:1px solid #d3d8dd;border-bottom:none;border-radius:5px 5px 0 0;box-sizing:content-box"></div>
<svg style="position:absolute;left:279px;top:72.2px" width="18" height="14" viewBox="0 0 18 14" fill="none"><path d="M1.9 5.6 L9 1.2 L16.1 5.6 L9 10 Z" stroke="#333" stroke-width="1.3" stroke-linejoin="miter"/><path d="M1.9 8.7 L9 13 L16.1 8.7" stroke="#35b9ef" stroke-width="1.7"/></svg>
<div class="t" style="left:302.4px;top:73.0px;font-size:12.5px;color:#1ab99a;font-weight:normal;transform:scaleX(0.9904);transform-origin:0 0;">Печать ценников ТСД</div>
<svg style="position:absolute;left:431px;top:71px" width="15" height="15" viewBox="0 0 15 15" fill="none"><path d="M1.5 1.5 L13.5 13.5 M13.5 1.5 L1.5 13.5" stroke="#9a9a9a" stroke-width="1.6"/></svg>
<svg style="position:absolute;left:1389px;top:69px" width="17" height="17" viewBox="0 0 17 17" fill="none"><path d="M2 15 L3 11 L12.5 1.5 L15.5 4.5 L6 14 Z M10.5 3.5 L13.5 6.5" stroke="#9aa0a6" stroke-width="1.3" stroke-linejoin="round"/></svg>
<svg style="position:absolute;left:1413px;top:70px" width="15" height="15" viewBox="0 0 15 15" fill="none"><path d="M1 5 V1 H5 M10 1 H14 V5 M14 10 V14 H10 M5 14 H1 V10" stroke="#9aa0a6" stroke-width="2"/></svg>
<svg style="position:absolute;left:250.5px;top:104.5px" width="10" height="7" viewBox="0 0 10 7" fill="none"><path d="M1 1.2 L4.6 4.8 L8.2 1.2" stroke="#9ea3a8" stroke-width="1.6"/></svg>
<div class="t" style="left:263.0px;top:103.0px;font-size:11px;color:#9ea3a8;font-weight:normal;transform:scaleX(0.9442);transform-origin:0 0;">Дата</div>
<div class="t" style="left:250.7px;top:128.0px;font-size:13px;color:#2a2a2a;font-weight:normal;transform:scaleX(0.9289);transform-origin:0 0;">Дата (ИД)</div>
<div style="position:absolute;left:314px;top:122px;width:59.5px;height:24.5px;box-sizing:border-box;background:#fff;border:1px solid #dfe2e6;border-radius:5px"></div>
<div class="t" style="left:320.3px;top:128.0px;font-size:13px;color:#2a2a2a;font-weight:normal;transform:scaleX(0.9624);transform-origin:0 0;">10.06.24</div>
<svg style="position:absolute;left:250.5px;top:158.5px" width="10" height="7" viewBox="0 0 10 7" fill="none"><path d="M1 1.2 L4.6 4.8 L8.2 1.2" stroke="#9ea3a8" stroke-width="1.6"/></svg>
<div class="t" style="left:263.0px;top:157.0px;font-size:11px;color:#9ea3a8;font-weight:normal;transform:scaleX(0.9766);transform-origin:0 0;">Документ ТСД</div>
<div style="position:absolute;left:250px;top:177px;width:1178px;height:59px;background:#fff"></div>
<div style="position:absolute;left:250px;top:235px;width:1178px;height:1px;background:#e2e5e8"></div>
<div style="position:absolute;left:250px;top:236px;width:1178px;height:27px;background:#fff"></div>
<div style="position:absolute;left:250px;top:263px;width:1178px;height:30px;background:#e6e6e6"></div>
<div style="position:absolute;left:332px;top:236px;width:1px;height:57px;background:#ececec"></div>
<div style="position:absolute;left:1427px;top:236px;width:1px;height:57px;background:#d9ecd9"></div>
<div class="t" style="left:280.7px;top:201.0px;font-size:11px;color:#1f1f1f;font-weight:bold;transform:scaleX(1.0014);transform-origin:0 0;">Код</div>
<div class="t" style="left:336.8px;top:184.0px;font-size:11px;color:#1f1f1f;font-weight:bold;">Дата</div>
<div class="t" style="left:336.8px;top:201.0px;font-size:11px;color:#1f1f1f;font-weight:bold;">докумен</div>
<div class="t" style="left:336.8px;top:217.0px;font-size:11px;color:#1f1f1f;font-weight:bold;">та</div>
<div class="t" style="left:394.7px;top:184.0px;font-size:11px;color:#1f1f1f;font-weight:bold;">Врем</div>
<div class="t" style="left:394.7px;top:201.0px;font-size:11px;color:#1f1f1f;font-weight:bold;">я</div>
<div class="t" style="left:394.7px;top:217.0px;font-size:11px;color:#1f1f1f;font-weight:bold;">доку</div>
<div class="t" style="left:492.8px;top:201.0px;font-size:11px;color:#1f1f1f;font-weight:bold;transform:scaleX(0.9860);transform-origin:0 0;">Склад</div>
<div class="t" style="left:598.5px;top:201.0px;font-size:11px;color:#1f1f1f;font-weight:bold;transform:scaleX(0.9554);transform-origin:0 0;">Группа ТСД</div>
<div class="t" style="left:674.8px;top:191.0px;font-size:11px;color:#1f1f1f;font-weight:bold;">Тип</div>
<div class="t" style="left:674.8px;top:208.0px;font-size:11px;color:#1f1f1f;font-weight:bold;">документа</div>
<div class="t" style="left:758.5px;top:184.0px;font-size:11px;color:#1f1f1f;font-weight:bold;">Код в</div>
<div class="t" style="left:758.5px;top:201.0px;font-size:11px;color:#1f1f1f;font-weight:bold;">справочнике</div>
<div class="t" style="left:758.5px;top:217.0px;font-size:11px;color:#1f1f1f;font-weight:bold;">1</div>
<div class="t" style="left:841.2px;top:184.0px;font-size:11px;color:#1f1f1f;font-weight:bold;">Код в</div>
<div class="t" style="left:841.2px;top:201.0px;font-size:11px;color:#1f1f1f;font-weight:bold;">справочнике</div>
<div class="t" style="left:841.2px;top:217.0px;font-size:11px;color:#1f1f1f;font-weight:bold;">2</div>
<div class="t" style="left:984.6px;top:201.0px;font-size:11px;color:#1f1f1f;font-weight:bold;transform:scaleX(1.0239);transform-origin:0 0;">Имя</div>
<div class="t" style="left:1083.8px;top:201.0px;font-size:11px;color:#1f1f1f;font-weight:bold;transform:scaleX(1.0014);transform-origin:0 0;">Количество</div>
<div class="t" style="left:1161.7px;top:184.0px;font-size:11px;color:#1f1f1f;font-weight:bold;">Кол-во</div>
<div class="t" style="left:1161.7px;top:201.0px;font-size:11px;color:#1f1f1f;font-weight:bold;">SKU к</div>
<div class="t" style="left:1161.7px;top:217.0px;font-size:11px;color:#1f1f1f;font-weight:bold;">печати</div>
<div class="t" style="left:1229.6px;top:184.0px;font-size:11px;color:#1f1f1f;font-weight:bold;">Кол-во</div>
<div class="t" style="left:1229.6px;top:201.0px;font-size:11px;color:#1f1f1f;font-weight:bold;transform:scaleX(0.9958);transform-origin:0 0;">отсканированных</div>
<div class="t" style="left:1229.6px;top:217.0px;font-size:11px;color:#1f1f1f;font-weight:bold;">ценников</div>
<div class="t" style="left:1348.3px;top:184.0px;font-size:11px;color:#1f1f1f;font-weight:bold;transform:scaleX(1.0269);transform-origin:0 0;">Ценников к</div>
<div class="t" style="left:1348.3px;top:201.0px;font-size:11px;color:#1f1f1f;font-weight:bold;">печати</div>
<div class="t" style="left:1348.3px;top:217.0px;font-size:11px;color:#1f1f1f;font-weight:bold;">(всего)</div>
<div style="position:absolute;left:254px;top:233.8px;width:78.5px;height:26px;overflow:hidden">
<div class="t" style="left:0.0px;top:9.0px;font-size:13px;color:#2a2a2a;font-weight:normal;transform:scaleX(1.0400);transform-origin:0 0;">00002 2024-03-13</div>
</div>
<div class="t" style="left:338.4px;top:243.0px;font-size:13px;color:#2a2a2a;font-weight:normal;transform:scaleX(0.9525);transform-origin:0 0;">13.03.24</div>
<div class="t" style="left:396.0px;top:243.0px;font-size:13px;color:#2a2a2a;font-weight:normal;transform:scaleX(0.9898);transform-origin:0 0;">17:34</div>
<div class="t" style="left:436.6px;top:243.0px;font-size:13px;color:#2a2a2a;font-weight:normal;transform:scaleX(0.9674);transform-origin:0 0;">Магазин 1</div>
<div style="position:absolute;left:674.8px;top:233.8px;width:78.5px;height:26px;overflow:hidden">
<div class="t" style="left:0.0px;top:9.0px;font-size:13px;color:#2a2a2a;font-weight:normal;">Печать ценников ТСД</div>
</div>
<div class="t" style="left:758.5px;top:243.0px;font-size:13px;color:#2a2a2a;font-weight:normal;transform:scaleX(0.9562);transform-origin:0 0;">ЦН02</div>
<div class="t" style="left:923.7px;top:243.0px;font-size:13px;color:#2a2a2a;font-weight:normal;transform:scaleX(1.0096);transform-origin:0 0;">00002</div>
<div class="t" style="left:621.5px;width:600px;text-align:right;top:243.0px;font-size:13px;color:#2a2a2a;font-weight:normal;">1</div>
<div class="t" style="left:740.5px;width:600px;text-align:right;top:243.0px;font-size:13px;color:#2a2a2a;font-weight:normal;">1</div>
<div class="t" style="left:823.6px;width:600px;text-align:right;top:243.0px;font-size:13px;color:#2a2a2a;font-weight:normal;">1</div>
<div style="position:absolute;left:254px;top:261.7px;width:78.5px;height:26px;overflow:hidden">
<div class="t" style="left:0.0px;top:9.0px;font-size:13px;color:#2a2a2a;font-weight:normal;transform:scaleX(1.0400);transform-origin:0 0;">00004 2024-03-13</div>
</div>
<div class="t" style="left:338.4px;top:271.0px;font-size:13px;color:#2a2a2a;font-weight:normal;transform:scaleX(0.9525);transform-origin:0 0;">13.03.24</div>
<div class="t" style="left:396.0px;top:271.0px;font-size:13px;color:#2a2a2a;font-weight:normal;transform:scaleX(0.9898);transform-origin:0 0;">18:07</div>
<div class="t" style="left:436.6px;top:271.0px;font-size:13px;color:#2a2a2a;font-weight:normal;transform:scaleX(0.9674);transform-origin:0 0;">Магазин 3</div>
<div style="position:absolute;left:674.8px;top:261.7px;width:78.5px;height:26px;overflow:hidden">
<div class="t" style="left:0.0px;top:9.0px;font-size:13px;color:#2a2a2a;font-weight:normal;">Печать ценников ТСД</div>
</div>
<div class="t" style="left:758.5px;top:271.0px;font-size:13px;color:#2a2a2a;font-weight:normal;transform:scaleX(0.9562);transform-origin:0 0;">ЦН01</div>
<div class="t" style="left:923.7px;top:271.0px;font-size:13px;color:#2a2a2a;font-weight:normal;transform:scaleX(1.0096);transform-origin:0 0;">00004</div>
<div class="t" style="left:621.5px;width:600px;text-align:right;top:271.0px;font-size:13px;color:#2a2a2a;font-weight:normal;">6</div>
<div class="t" style="left:740.5px;width:600px;text-align:right;top:271.0px;font-size:13px;color:#2a2a2a;font-weight:normal;">6</div>
<div class="t" style="left:823.6px;width:600px;text-align:right;top:271.0px;font-size:13px;color:#2a2a2a;font-weight:normal;">6</div>
<svg style="position:absolute;left:255px;top:409px" width="7" height="9" viewBox="0 0 7 9" fill="none"><path d="M5.5 1 L1.5 4.5 L5.5 8 Z" fill="#d4d6d8"/></svg>
<div style="position:absolute;left:267px;top:407px;width:1026px;height:13px;background:#d9d9d9"></div>
<svg style="position:absolute;left:1416.5px;top:409px" width="7" height="9" viewBox="0 0 7 9" fill="none"><path d="M1.5 1 L5.5 4.5 L1.5 8 Z" fill="#d4d6d8"/></svg>
<div style="position:absolute;left:250px;top:422px;width:1178px;height:1px;background:#d3d8dd"></div>
<div style="position:absolute;left:250px;top:427px;width:23.5px;height:24px;background:#e4e6e8;border-radius:5px"></div>
<svg style="position:absolute;left:255px;top:432px" width="16" height="13" viewBox="0 0 16 13" fill="none"><path d="M5.5 2 H15 M5.5 6.5 H15 M5.5 11 H15" stroke="#fff" stroke-width="1.7"/><circle cx="1.8" cy="2" r="1.2" fill="#fff"/><circle cx="1.8" cy="6.5" r="1.2" fill="#fff"/><circle cx="1.8" cy="11" r="1.2" fill="#fff"/></svg>
<svg style="position:absolute;left:277px;top:433px" width="17" height="12" viewBox="0 0 17 12" fill="none"><path d="M1 1 H16 V11 H1 Z M1 6 H16 M6 1 V11 M11 1 V11" stroke="#a4abb0" stroke-width="1.2"/></svg>
<svg style="position:absolute;left:299.5px;top:431px" width="18" height="16" viewBox="0 0 18 16" fill="none"><path d="M1 3 H17 V15.5 H1 Z M1 6.5 H17 M4.5 0.5 V4 M13.5 0.5 V4" stroke="#a4abb0" stroke-width="1.2"/><path d="M4.5 12 H7 M8 12 H10 M10 9.5 H12.5 M13 9.5 H15" stroke="#a4abb0" stroke-width="1.5"/></svg>
<svg style="position:absolute;left:333.5px;top:432px" width="14" height="14" viewBox="0 0 14 14" fill="none"><path d="M0.8 0.8 H13 L8.3 7 V13.2 L5.5 11.5 V7 Z" stroke="#a4abb0" stroke-width="1.2" stroke-linejoin="round"/></svg>
<svg style="position:absolute;left:364.0px;top:430.5px" width="17" height="17" viewBox="0 0 17 17" fill="none"><path d="M14.51 6.96 L16.18 7.16 A7.8 7.8 0 0 1 16.18 9.84 L14.51 10.04 A6.2 6.2 0 0 1 13.84 11.66 L14.88 12.99 A7.8 7.8 0 0 1 12.99 14.88 L11.66 13.84 A6.2 6.2 0 0 1 10.04 14.51 L9.84 16.18 A7.8 7.8 0 0 1 7.16 16.18 L6.96 14.51 A6.2 6.2 0 0 1 5.34 13.84 L4.01 14.88 A7.8 7.8 0 0 1 2.12 12.99 L3.16 11.66 A6.2 6.2 0 0 1 2.49 10.04 L0.82 9.84 A7.8 7.8 0 0 1 0.82 7.16 L2.49 6.96 A6.2 6.2 0 0 1 3.16 5.34 L2.12 4.01 A7.8 7.8 0 0 1 4.01 2.12 L5.34 3.16 A6.2 6.2 0 0 1 6.96 2.49 L7.16 0.82 A7.8 7.8 0 0 1 9.84 0.82 L10.04 2.49 A6.2 6.2 0 0 1 11.66 3.16 L12.99 2.12 A7.8 7.8 0 0 1 14.88 4.01 L13.84 5.34 A6.2 6.2 0 0 1 14.51 6.96 Z" stroke="#a4abb0" stroke-width="1.2" stroke-linejoin="round"/><circle cx="8.5" cy="8.5" r="2.6" stroke="#a4abb0" stroke-width="1.2"/></svg>
<div class="t" style="left:395.0px;top:434.0px;font-size:11px;color:#9aa1a6;font-weight:normal;transform:scaleX(0.9371);transform-origin:0 0;">123</div>
<svg style="position:absolute;left:421.0px;top:432.5px" width="13" height="13" viewBox="0 0 13 13" fill="none"><path d="M6.5 0.5 V12.5 M0.3 6.5 H12.7" stroke="#a4abb0" stroke-width="1.3"/></svg>
<svg style="position:absolute;left:450.5px;top:431.5px" width="18" height="15" viewBox="0 0 18 15" fill="none"><path d="M8.8 0.5 V9.5 M5 6 L8.8 9.5 L12.6 6 M1 8.5 V13.5 H16.8 V8.5" stroke="#a4abb0" stroke-width="1.2"/></svg>
<svg style="position:absolute;left:482.5px;top:431.5px" width="18" height="15" viewBox="0 0 18 15" fill="none"><path d="M2 9 V6 Q2 3.5 4.5 3.5 H15.5 M12.8 0.8 L15.5 3.5 L12.8 6.2 M15.8 6 V9 Q15.8 11.5 13.3 11.5 H2.5 M5.2 8.8 L2.5 11.5 L5.2 14.2" stroke="#a4abb0" stroke-width="1.2" stroke-linejoin="round"/></svg>
<svg style="position:absolute;left:292.8px;top:460.5px" width="14" height="14" viewBox="0 0 14 14" fill="none"><rect x="0" y="0" width="13.5" height="13.5" rx="3" fill="#2d3e50"/><path d="M3.3 7 L5.8 9.4 L10.3 4.6" stroke="#fff" stroke-width="1.7"/></svg>
<div class="t" style="left:310.6px;top:461.0px;font-size:12.6px;color:#2a2a2a;font-weight:normal;transform:scaleX(0.9158);transform-origin:0 0;">На дату (F6)</div>
<svg style="position:absolute;left:406.8px;top:460.5px" width="14" height="14" viewBox="0 0 14 14" fill="none"><rect x="0" y="0" width="13.5" height="13.5" rx="3" fill="#2d3e50"/><path d="M3.3 7 L5.8 9.4 L10.3 4.6" stroke="#fff" stroke-width="1.7"/></svg>
<div class="t" style="left:423.5px;top:461.0px;font-size:12.6px;color:#2a2a2a;font-weight:normal;transform:scaleX(0.9950);transform-origin:0 0;">Неиспользованные (F7)</div>
<svg style="position:absolute;left:592px;top:460.5px" width="14" height="14" viewBox="0 0 14 14" fill="none"><rect x="0" y="0" width="13.5" height="13.5" rx="3" fill="#2d3e50"/><path d="M3.3 7 L5.8 9.4 L10.3 4.6" stroke="#fff" stroke-width="1.7"/></svg>
<div class="t" style="left:608.9px;top:461.0px;font-size:12.6px;color:#2a2a2a;font-weight:normal;transform:scaleX(0.9638);transform-origin:0 0;">Открыт (F6)</div>
<div style="position:absolute;left:683px;top:455px;width:73.5px;height:25px;box-sizing:border-box;border-radius:5px;border:1px solid #a6b2b1;background:#f7f8fa"></div>
<div class="t" style="left:695.8px;top:462.0px;font-size:12.5px;color:#a5abb0;font-weight:normal;transform:scaleX(0.9970);transform-origin:0 0;">Закрыть</div>
<div style="position:absolute;left:765px;top:455px;width:148.7px;height:25px;box-sizing:border-box;border-radius:5px;background:#2c3e50"></div>
<div class="t" style="left:778.0px;top:462.0px;font-size:12.5px;color:#fff;font-weight:normal;transform:scaleX(1.0048);transform-origin:0 0;">Распечатать ценники</div>
<div style="position:absolute;left:922px;top:455px;width:158px;height:25px;box-sizing:border-box;border-radius:5px;background:#2c3e50"></div>
<div class="t" style="left:935.5px;top:462.0px;font-size:12.5px;color:#fff;font-weight:normal;transform:scaleX(1.0112);transform-origin:0 0;">Перепечатать ценники</div>
<div style="position:absolute;left:758px;top:444px;width:325px;height:42px;box-sizing:border-box;border:3px solid #f23a3a"></div>
<div style="position:absolute;left:1091px;top:455px;width:100px;height:25px;box-sizing:border-box;border-radius:5px;background:#2c3e50"></div>
<svg style="position:absolute;left:1104.5px;top:462px" width="11" height="11" viewBox="0 0 11 11" fill="none"><path d="M5.5 0.5 V10.5 M0.5 5.5 H10.5" stroke="#1e1e1e" stroke-width="2.2"/></svg>
<div class="t" style="left:1122.0px;top:462.0px;font-size:12.5px;color:#fff;font-weight:normal;transform:scaleX(1.0137);transform-origin:0 0;">Добавить</div>
<svg style="position:absolute;left:1211px;top:461px" width="14" height="14" viewBox="0 0 14 14" fill="none"><path d="M2 11 L2.8 8 L9 1.8 L11.3 4 L5 10.3 Z" stroke="#3a3a3a" stroke-width="1.2" stroke-linejoin="round"/><path d="M1 13 H13" stroke="#35b9ef" stroke-width="1.3"/></svg>
<div class="t" style="left:1230.0px;top:462.0px;font-size:12.5px;color:#1ab99a;font-weight:normal;transform:scaleX(0.9994);transform-origin:0 0;">Редактировать</div>
<div style="position:absolute;left:1337.5px;top:455px;width:90.5px;height:25px;box-sizing:border-box;border-radius:5px;border:1px solid #a6b2b1;background:#f7f8fa"></div>
<div style="position:absolute;left:1350px;top:467px;width:11px;height:2px;background:#a0a6ab"></div>
<div class="t" style="left:1368.4px;top:462.0px;font-size:12.5px;color:#a5abb0;font-weight:normal;transform:scaleX(0.9722);transform-origin:0 0;">Удалить</div>
<div style="position:absolute;left:246px;top:514px;width:1186px;height:1px;background:#d3d8dd"></div>
<div class="t" style="left:279.8px;top:497.0px;font-size:12.5px;color:#a3a8ad;font-weight:normal;transform:scaleX(1.0185);transform-origin:0 0;">Печать ценников</div>
<div style="position:absolute;left:414px;top:489px;width:197px;height:26px;background:#fff;border:1px solid #d3d8dd;border-bottom:none;border-radius:5px 5px 0 0"></div>
<div class="t" style="left:447.0px;top:497.0px;font-size:12.5px;color:#1ab99a;font-weight:normal;transform:scaleX(0.9769);transform-origin:0 0;">Строка документа ТСД</div>
<div style="position:absolute;left:412px;top:487px;width:201px;height:32px;box-sizing:border-box;border:3px solid #f23a3a"></div>
<div style="position:absolute;left:250px;top:524px;width:1178px;height:194px;background:#fff"></div>
<div class="t" style="left:275.5px;top:531.0px;font-size:11px;color:#1f1f1f;font-weight:bold;transform:scaleX(1.0115);transform-origin:0 0;">Номер</div>
<div class="t" style="left:408.3px;top:531.0px;font-size:11px;color:#1f1f1f;font-weight:bold;transform:scaleX(1.0099);transform-origin:0 0;">Штрихкод</div>
<div class="t" style="left:783.0px;top:531.0px;font-size:11px;color:#1f1f1f;font-weight:bold;transform:scaleX(1.0285);transform-origin:0 0;">Наименование</div>
<div class="t" style="left:1152.0px;top:531.0px;font-size:11px;color:#1f1f1f;font-weight:bold;transform:scaleX(1.0352);transform-origin:0 0;">Цена</div>
<div class="t" style="left:1238.0px;top:531.0px;font-size:11px;color:#1f1f1f;font-weight:bold;transform:scaleX(1.0014);transform-origin:0 0;">Количество</div>
<div class="t" style="left:1357.0px;top:531.0px;font-size:11px;color:#1f1f1f;font-weight:bold;transform:scaleX(0.9955);transform-origin:0 0;">Сумма</div>
<div style="position:absolute;left:250px;top:549px;width:1178px;height:28.5px;background:#e6e6e6"></div>
<div class="t" style="left:340.5px;top:557.0px;font-size:13px;color:#2a2a2a;font-weight:normal;transform:scaleX(1.0200);transform-origin:0 0;">98741</div>
<div class="t" style="left:540.6px;top:557.0px;font-size:13px;color:#2a2a2a;font-weight:normal;transform:scaleX(0.9630);transform-origin:0 0;">Балык деликатесный ЧЕРКИЗОВО</div>
<div class="t" style="left:614.2px;width:600px;text-align:right;top:557.0px;font-size:13px;color:#2a2a2a;font-weight:normal;transform:scaleX(1.0000);transform-origin:100% 0;">618,56</div>
<div class="t" style="left:718.3px;width:600px;text-align:right;top:557.0px;font-size:13px;color:#2a2a2a;font-weight:normal;">1</div>
<div class="t" style="left:823.6px;width:600px;text-align:right;top:557.0px;font-size:13px;color:#2a2a2a;font-weight:normal;transform:scaleX(1.0000);transform-origin:100% 0;">618,56</div>
<div style="position:absolute;left:250px;top:577px;width:1178px;height:1px;background:#e3e6e9"></div>
<div class="t" style="left:340.5px;top:585.0px;font-size:13px;color:#2a2a2a;font-weight:normal;transform:scaleX(1.0200);transform-origin:0 0;">10116</div>
<div class="t" style="left:540.6px;top:585.0px;font-size:13px;color:#2a2a2a;font-weight:normal;transform:scaleX(0.9630);transform-origin:0 0;">Ветчина домашняя 350 гр ЧЕРКИЗОВО</div>
<div class="t" style="left:614.2px;width:600px;text-align:right;top:585.0px;font-size:13px;color:#2a2a2a;font-weight:normal;transform:scaleX(1.0000);transform-origin:100% 0;">437,5</div>
<div class="t" style="left:718.3px;width:600px;text-align:right;top:585.0px;font-size:13px;color:#2a2a2a;font-weight:normal;">1</div>
<div class="t" style="left:823.6px;width:600px;text-align:right;top:585.0px;font-size:13px;color:#2a2a2a;font-weight:normal;transform:scaleX(1.0000);transform-origin:100% 0;">437,5</div>
<div style="position:absolute;left:250px;top:605px;width:1178px;height:1px;background:#e3e6e9"></div>
<div class="t" style="left:340.5px;top:613.0px;font-size:13px;color:#2a2a2a;font-weight:normal;transform:scaleX(1.0200);transform-origin:0 0;">89654</div>
<div class="t" style="left:540.6px;top:613.0px;font-size:13px;color:#2a2a2a;font-weight:normal;transform:scaleX(0.9630);transform-origin:0 0;">Колбаски Говяжьи ЧЕРКИЗОВО</div>
<div class="t" style="left:614.2px;width:600px;text-align:right;top:613.0px;font-size:13px;color:#2a2a2a;font-weight:normal;transform:scaleX(1.0000);transform-origin:100% 0;">557,13</div>
<div class="t" style="left:718.3px;width:600px;text-align:right;top:613.0px;font-size:13px;color:#2a2a2a;font-weight:normal;">1</div>
<div class="t" style="left:823.6px;width:600px;text-align:right;top:613.0px;font-size:13px;color:#2a2a2a;font-weight:normal;transform:scaleX(1.0000);transform-origin:100% 0;">557,13</div>
<div style="position:absolute;left:250px;top:634px;width:1178px;height:1px;background:#e3e6e9"></div>
<div class="t" style="left:340.5px;top:641.0px;font-size:13px;color:#2a2a2a;font-weight:normal;transform:scaleX(1.0200);transform-origin:0 0;">56478</div>
<div class="t" style="left:540.6px;top:641.0px;font-size:13px;color:#2a2a2a;font-weight:normal;transform:scaleX(0.9630);transform-origin:0 0;">Колбаски Куриные ЧЕРКИЗОВО</div>
<div class="t" style="left:614.2px;width:600px;text-align:right;top:641.0px;font-size:13px;color:#2a2a2a;font-weight:normal;transform:scaleX(1.0000);transform-origin:100% 0;">515,86</div>
<div class="t" style="left:718.3px;width:600px;text-align:right;top:641.0px;font-size:13px;color:#2a2a2a;font-weight:normal;">1</div>
<div class="t" style="left:823.6px;width:600px;text-align:right;top:641.0px;font-size:13px;color:#2a2a2a;font-weight:normal;transform:scaleX(1.0000);transform-origin:100% 0;">515,86</div>
<div style="position:absolute;left:250px;top:662px;width:1178px;height:1px;background:#e3e6e9"></div>
<div class="t" style="left:340.5px;top:669.0px;font-size:13px;color:#2a2a2a;font-weight:normal;transform:scaleX(1.0200);transform-origin:0 0;">14789</div>
<div class="t" style="left:540.6px;top:669.0px;font-size:13px;color:#2a2a2a;font-weight:normal;transform:scaleX(0.9630);transform-origin:0 0;">Колбаски Свиные ЧЕРКИЗОВО</div>
<div class="t" style="left:614.2px;width:600px;text-align:right;top:669.0px;font-size:13px;color:#2a2a2a;font-weight:normal;transform:scaleX(1.0000);transform-origin:100% 0;">531,88</div>
<div class="t" style="left:718.3px;width:600px;text-align:right;top:669.0px;font-size:13px;color:#2a2a2a;font-weight:normal;">1</div>
<div class="t" style="left:823.6px;width:600px;text-align:right;top:669.0px;font-size:13px;color:#2a2a2a;font-weight:normal;transform:scaleX(1.0000);transform-origin:100% 0;">531,88</div>
<div style="position:absolute;left:250px;top:690px;width:1178px;height:1px;background:#e3e6e9"></div>
<div class="t" style="left:340.5px;top:698.0px;font-size:13px;color:#2a2a2a;font-weight:normal;transform:scaleX(1.0200);transform-origin:0 0;">4810953022907</div>
<div class="t" style="left:540.6px;top:698.0px;font-size:13px;color:#2a2a2a;font-weight:normal;transform:scaleX(0.9630);transform-origin:0 0;">Паштет мясной печеночный 230 гр Белатмит</div>
<div class="t" style="left:614.2px;width:600px;text-align:right;top:698.0px;font-size:13px;color:#2a2a2a;font-weight:normal;transform:scaleX(1.0000);transform-origin:100% 0;">57,06</div>
<div class="t" style="left:718.3px;width:600px;text-align:right;top:698.0px;font-size:13px;color:#2a2a2a;font-weight:normal;">1</div>
<div class="t" style="left:823.6px;width:600px;text-align:right;top:698.0px;font-size:13px;color:#2a2a2a;font-weight:normal;transform:scaleX(1.0000);transform-origin:100% 0;">57,06</div>
<div style="position:absolute;left:250px;top:718px;width:1178px;height:1px;background:#e3e6e9"></div>
<div style="position:absolute;left:249.5px;top:779px;width:1182px;height:1px;background:#d3d8dd"></div>
<div style="position:absolute;left:250px;top:784px;width:23.5px;height:24px;background:#e4e6e8;border-radius:5px"></div>
<svg style="position:absolute;left:255px;top:789px" width="16" height="13" viewBox="0 0 16 13" fill="none"><path d="M5.5 2 H15 M5.5 6.5 H15 M5.5 11 H15" stroke="#fff" stroke-width="1.7"/><circle cx="1.8" cy="2" r="1.2" fill="#fff"/><circle cx="1.8" cy="6.5" r="1.2" fill="#fff"/><circle cx="1.8" cy="11" r="1.2" fill="#fff"/></svg>
<svg style="position:absolute;left:277px;top:790px" width="17" height="12" viewBox="0 0 17 12" fill="none"><path d="M1 1 H16 V11 H1 Z M1 6 H16 M6 1 V11 M11 1 V11" stroke="#a4abb0" stroke-width="1.2"/></svg>
<svg style="position:absolute;left:310px;top:789px" width="14" height="14" viewBox="0 0 14 14" fill="none"><path d="M0.8 0.8 H13 L8.3 7 V13.2 L5.5 11.5 V7 Z" stroke="#a4abb0" stroke-width="1.2" stroke-linejoin="round"/></svg>
<svg style="position:absolute;left:340.5px;top:787.5px" width="17" height="17" viewBox="0 0 17 17" fill="none"><path d="M14.51 6.96 L16.18 7.16 A7.8 7.8 0 0 1 16.18 9.84 L14.51 10.04 A6.2 6.2 0 0 1 13.84 11.66 L14.88 12.99 A7.8 7.8 0 0 1 12.99 14.88 L11.66 13.84 A6.2 6.2 0 0 1 10.04 14.51 L9.84 16.18 A7.8 7.8 0 0 1 7.16 16.18 L6.96 14.51 A6.2 6.2 0 0 1 5.34 13.84 L4.01 14.88 A7.8 7.8 0 0 1 2.12 12.99 L3.16 11.66 A6.2 6.2 0 0 1 2.49 10.04 L0.82 9.84 A7.8 7.8 0 0 1 0.82 7.16 L2.49 6.96 A6.2 6.2 0 0 1 3.16 5.34 L2.12 4.01 A7.8 7.8 0 0 1 4.01 2.12 L5.34 3.16 A6.2 6.2 0 0 1 6.96 2.49 L7.16 0.82 A7.8 7.8 0 0 1 9.84 0.82 L10.04 2.49 A6.2 6.2 0 0 1 11.66 3.16 L12.99 2.12 A7.8 7.8 0 0 1 14.88 4.01 L13.84 5.34 A6.2 6.2 0 0 1 14.51 6.96 Z" stroke="#a4abb0" stroke-width="1.2" stroke-linejoin="round"/><circle cx="8.5" cy="8.5" r="2.6" stroke="#a4abb0" stroke-width="1.2"/></svg>
<div class="t" style="left:371.5px;top:791.0px;font-size:11px;color:#9aa1a6;font-weight:normal;transform:scaleX(0.9371);transform-origin:0 0;">123</div>
<svg style="position:absolute;left:397.5px;top:789.5px" width="13" height="13" viewBox="0 0 13 13" fill="none"><path d="M6.5 0.5 V12.5 M0.3 6.5 H12.7" stroke="#a4abb0" stroke-width="1.3"/></svg>
<svg style="position:absolute;left:427.0px;top:788.5px" width="18" height="15" viewBox="0 0 18 15" fill="none"><path d="M8.8 0.5 V9.5 M5 6 L8.8 9.5 L12.6 6 M1 8.5 V13.5 H16.8 V8.5" stroke="#a4abb0" stroke-width="1.2"/></svg>
<svg style="position:absolute;left:459.0px;top:788.5px" width="18" height="15" viewBox="0 0 18 15" fill="none"><path d="M2 9 V6 Q2 3.5 4.5 3.5 H15.5 M12.8 0.8 L15.5 3.5 L12.8 6.2 M15.8 6 V9 Q15.8 11.5 13.3 11.5 H2.5 M5.2 8.8 L2.5 11.5 L5.2 14.2" stroke="#a4abb0" stroke-width="1.2" stroke-linejoin="round"/></svg>
<div style="position:absolute;left:246px;top:813px;width:1186px;height:1px;background:#d3d8dd"></div>
<svg style="position:absolute;left:267px;top:829px" width="6" height="13" viewBox="0 0 6 13" fill="none"><circle cx="3" cy="2" r="1.5" fill="#333"/><circle cx="3" cy="6.3" r="1.5" fill="#333"/><circle cx="3" cy="10.6" r="1.5" fill="#333"/></svg>
<div style="position:absolute;left:995px;top:824px;width:38.5px;height:25px;box-sizing:border-box;border-radius:5px;border:1px solid #b3bcbe;background:#f7f8fa"></div>
<svg style="position:absolute;left:1006px;top:829.2px" width="14" height="14" viewBox="0 0 14 14" fill="none"><circle cx="7.00" cy="1.40" r="1.25" fill="#8f999d"/><circle cx="10.96" cy="3.04" r="1.25" fill="#8f999d"/><circle cx="12.60" cy="7.00" r="1.25" fill="#8f999d"/><circle cx="10.96" cy="10.96" r="1.25" fill="#8f999d"/><circle cx="7.00" cy="12.60" r="1.25" fill="#8f999d"/><circle cx="3.04" cy="10.96" r="1.25" fill="#8f999d"/><circle cx="1.40" cy="7.01" r="1.25" fill="#8f999d"/><circle cx="3.03" cy="3.05" r="1.25" fill="#8f999d"/></svg>
<div style="position:absolute;left:1042px;top:824px;width:106px;height:25px;box-sizing:border-box;border-radius:5px;border:1px solid #7d8a93;background:#f7f8fa"></div>
<svg style="position:absolute;left:1054px;top:829.5px" width="14" height="13" viewBox="0 0 14 13" fill="none"><path d="M1.8 2.5 Q1.8 1 3.3 1 H8.8 L12 4.2 V10.5 Q12 12 10.5 12 H3.3 Q1.8 12 1.8 10.5 Z" stroke="#7b7f82" stroke-width="1.6"/><path d="M2.8 7.2 H11 V11 H2.8 Z" fill="#c5c9cc"/><path d="M3 7.2 H10.8" stroke="#35b9ef" stroke-width="1.3"/></svg>
<div class="t" style="left:1073.5px;top:830.0px;font-size:12.8px;color:#737b81;font-weight:normal;transform:scaleX(0.9543);transform-origin:0 0;">Сохранить</div>
<div style="position:absolute;left:1156px;top:824px;width:100.5px;height:25px;box-sizing:border-box;border-radius:5px;border:1px solid #c9d1d3;background:#f7f8fa"></div>
<svg style="position:absolute;left:1168px;top:829px" width="14" height="14" viewBox="0 0 14 14" fill="none"><path d="M0.5 2.8 H13 M4.8 1 H8.7" stroke="#4fc3f7" stroke-width="1.3"/><path d="M2.5 4.5 V11.5 Q2.5 12.5 3.5 12.5 H9.5 Q10.5 12.5 10.5 11.5 V4.5" stroke="#6a6a6a" stroke-width="1.5"/></svg>
<div class="t" style="left:1186.6px;top:830.0px;font-size:12.8px;color:#bcc2c6;font-weight:normal;transform:scaleX(0.9814);transform-origin:0 0;">Отменить</div>
<div style="position:absolute;left:1265px;top:824px;width:62.5px;height:25px;box-sizing:border-box;border-radius:5px;background:#2c3e50"></div>
<svg style="position:absolute;left:1277px;top:830px" width="14" height="12" viewBox="0 0 14 12" fill="none"><path d="M1 6 L4.5 10.2 L12.5 1" stroke="#1f1f1f" stroke-width="1.4"/></svg>
<div class="t" style="left:1296.0px;top:829.0px;font-size:14px;color:#fff;font-weight:normal;transform:scaleX(0.9393);transform-origin:0 0;">OK</div>
<div style="position:absolute;left:1336px;top:824px;width:92px;height:25px;box-sizing:border-box;border-radius:5px;background:#97a3a3"></div>
<svg style="position:absolute;left:1348px;top:830px" width="13" height="13" viewBox="0 0 13 13" fill="none"><path d="M1.5 1.5 L11.5 11.5 M11.5 1.5 L1.5 11.5" stroke="#2a2a2a" stroke-width="1.5"/></svg>
<div class="t" style="left:1366.7px;top:830.0px;font-size:12.8px;color:#fff;font-weight:normal;transform:scaleX(0.9797);transform-origin:0 0;">Закрыть</div>
<div class="t" style="left:1442.0px;top:69.0px;font-size:11px;color:#3c3c50;font-weight:normal;">--</div>
<div class="t" style="left:1442.0px;top:88.0px;font-size:12.5px;color:#3c3c60;font-weight:normal;">И</div>
<div class="t" style="left:1442.0px;top:107.0px;font-size:11px;color:#3c3c50;font-weight:normal;">--</div>
<div class="t" style="left:1442.0px;top:126.0px;font-size:12.5px;color:#3c3c60;font-weight:normal;">И</div>
<div class="t" style="left:1442.0px;top:144.0px;font-size:11px;color:#3c3c50;font-weight:normal;">--</div>
<div class="t" style="left:1442.0px;top:164.0px;font-size:12.5px;color:#3c3c60;font-weight:normal;">И</div>
<div class="t" style="left:1442.0px;top:181.0px;font-size:11px;color:#3c3c50;font-weight:normal;">--</div>
<div class="t" style="left:1442.0px;top:202.0px;font-size:12.5px;color:#3c3c60;font-weight:normal;">И</div>
<div class="t" style="left:1442.0px;top:219.0px;font-size:11px;color:#3c3c50;font-weight:normal;">--</div>
<div class="t" style="left:1442.0px;top:240.0px;font-size:12.5px;color:#3c3c60;font-weight:normal;">И</div>
<div class="t" style="left:1442.0px;top:257.0px;font-size:11px;color:#3c3c50;font-weight:normal;">--</div>
<div class="t" style="left:1442.0px;top:278.0px;font-size:12.5px;color:#3c3c60;font-weight:normal;">И</div>
<svg style="position:absolute;left:1438px;top:843px" width="9" height="9" viewBox="0 0 9 9" fill="none"><path d="M4 1 L1 4.5 L4 8 Z M5 1 L8 4.5 L5 8 Z" fill="#d0d3d6"/></svg>
</body></html>
